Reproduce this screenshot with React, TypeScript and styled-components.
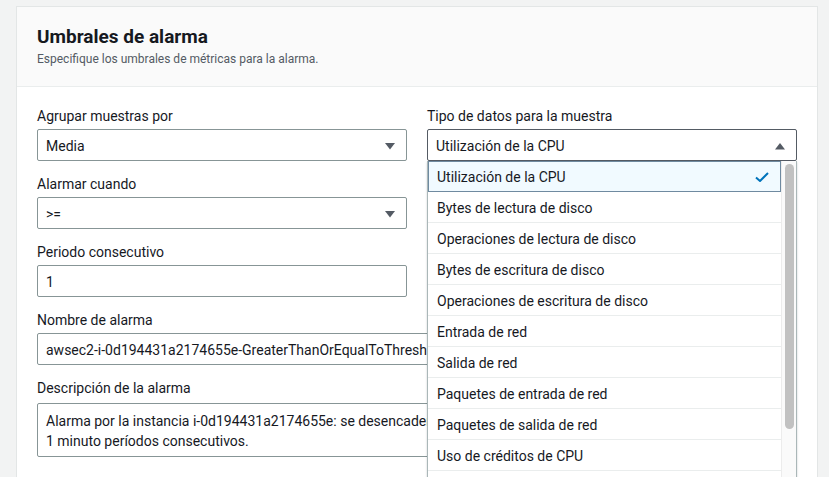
import React from "react";
import styled, { createGlobalStyle } from "styled-components";

const Global = createGlobalStyle`
  html, body { margin: 0; padding: 0; }
  body {
    background: #f2f3f3;
    font-family: Roboto, "Noto Sans", Arial, sans-serif;
    color: #16191f;
    overflow: hidden;
    height: 477px;
  }
  * { box-sizing: border-box; }
`;

const Page = styled.div`
  padding: 6px 11px 0 16px;
`;

const Card = styled.section`
  width: 802px;
  background: #ffffff;
  border: 1px solid #e3e6e6;
  border-bottom: none;
`;

const Header = styled.header`
  background: #fafafa;
  border-bottom: 1px solid #eaeded;
  padding: 19px 20px 19px;
`;

const Title = styled.h2`
  margin: 0;
  font-size: 19px;
  line-height: 22px;
  font-weight: 700;
  color: #16191f;
`;

const Subtitle = styled.p`
  margin: 3px 0 0;
  font-size: 12px;
  line-height: 16px;
  color: #545b64;
`;

const Body = styled.div`
  padding: 18px 20px 20px;
  display: flex;
  flex-direction: column;
  gap: 12px;
`;

const TwoCol = styled.div`
  display: grid;
  grid-template-columns: 370px 370px;
  column-gap: 20px;
  align-items: start;
`;

const Stack = styled.div`
  display: flex;
  flex-direction: column;
  gap: 12px;
`;

const Field = styled.div<{ $gap?: number }>`
  display: flex;
  flex-direction: column;
  gap: ${(p) => p.$gap ?? 2}px;
  position: relative;
`;

const Label = styled.label`
  font-size: 14px;
  line-height: 21px;
  padding-top: 1px;
  color: #16191f;
`;

const Box = styled.div<{ $open?: boolean }>`
  height: 32px;
  border: 1px solid ${(p) => (p.$open ? "#545b64" : "#879596")};
  border-radius: 2px;
  background: #fff;
  display: flex;
  align-items: center;
  justify-content: space-between;
  padding: 1px 10px 0 8px;
  font-size: 14px;
  color: #16191f;
  white-space: nowrap;
  overflow: hidden;
`;

const TextArea = styled.div`
  height: 54px;
  border: 1px solid #879596;
  border-radius: 2px;
  background: #fff;
  padding: 7px 8px 5px;
  font-size: 14px;
  line-height: 20px;
  white-space: pre;
  overflow: hidden;
`;

const Caret = ({ up }: { up?: boolean }) => (
  <svg width="12" height="8" viewBox="0 0 12 8">
    <polygon points={up ? "1,7.5 11,7.5 6,1" : "1,1 11,1 6,7.5"} fill="#545b64" />
  </svg>
);

const Dropdown = styled.div`
  position: absolute;
  top: 100%;
  left: 0;
  width: 370px;
  background: #fff;
  border: 1px solid #aab7b8;
  border-top: none;
  display: flex;
  z-index: 10;
  box-shadow: 0 1px 2px rgba(0, 28, 36, 0.2);
`;

const Options = styled.ul`
  list-style: none;
  margin: 0;
  padding: 0;
  flex: 1;
`;

const Option = styled.li<{ $selected?: boolean }>`
  height: 31px;
  display: flex;
  align-items: center;
  justify-content: space-between;
  padding: 2px 11px 0 9px;
  font-size: 14px;
  color: #16191f;
  border-bottom: 1px solid #eaeded;
  background: ${(p) => (p.$selected ? "#f1faff" : "#fff")};
  ${(p) => (p.$selected ? "outline: 1px solid #6f8aa0; outline-offset: -1px;" : "")}
`;

const Scrollbar = styled.div`
  width: 15px;
  background: #fafafa;
  border-left: 1px solid #ececec;
  padding: 3px 2px 0 3px;
`;

const Thumb = styled.div`
  height: 265px;
  border-radius: 5px;
  background: #c1c1c1;
`;

const Check = () => (
  <svg width="16" height="16" viewBox="0 0 16 16">
    <polyline points="2,8.5 6,12 14,4" fill="none" stroke="#0073bb" strokeWidth="2" strokeLinejoin="round" />
  </svg>
);

const options = [
  "Utilización de la CPU",
  "Bytes de lectura de disco",
  "Operaciones de lectura de disco",
  "Bytes de escritura de disco",
  "Operaciones de escritura de disco",
  "Entrada de red",
  "Salida de red",
  "Paquetes de entrada de red",
  "Paquetes de salida de red",
  "Uso de créditos de CPU",
  "Saldo de créditos de CPU",
];

export default function App() {
  return (
    <Page>
      <Global />
      <Card>
        <Header>
          <Title>Umbrales de alarma</Title>
          <Subtitle>Especifique los umbrales de métricas para la alarma.</Subtitle>
        </Header>
        <Body>
          <TwoCol>
            <Stack>
              <Field>
                <Label>Agrupar muestras por</Label>
                <Box>
                  <span>Media</span>
                  <Caret />
                </Box>
              </Field>
              <Field>
                <Label>Alarmar cuando</Label>
                <Box>
                  <span>&gt;=</span>
                  <Caret />
                </Box>
              </Field>
              <Field>
                <Label>Periodo consecutivo</Label>
                <Box>
                  <span>1</span>
                </Box>
              </Field>
            </Stack>
            <Field>
              <Label>Tipo de datos para la muestra</Label>
              <Box $open>
                <span>Utilización de la CPU</span>
                <Caret up />
              </Box>
              <Dropdown>
                <Options>
                  {options.map((o, i) => (
                    <Option key={o} $selected={i === 0}>
                      <span>{o}</span>
                      {i === 0 && <Check />}
                    </Option>
                  ))}
                </Options>
                <Scrollbar>
                  <Thumb />
                </Scrollbar>
              </Dropdown>
            </Field>
          </TwoCol>
          <Field>
            <Label>Nombre de alarma</Label>
            <Box>
              <span>awsec2-i-0d194431a2174655e-GreaterThanOrEqualToThreshold-CPUUtilization</span>
            </Box>
          </Field>
          <Field $gap={4}>
            <Label>Descripción de la alarma</Label>
            <TextArea>
              {"Alarma por la instancia i-0d194431a2174655e: se desencadena cuando Utilización de la CPU >= 80 durante\n1 minuto períodos consecutivos."}
            </TextArea>
          </Field>
        </Body>
      </Card>
    </Page>
  );
}
